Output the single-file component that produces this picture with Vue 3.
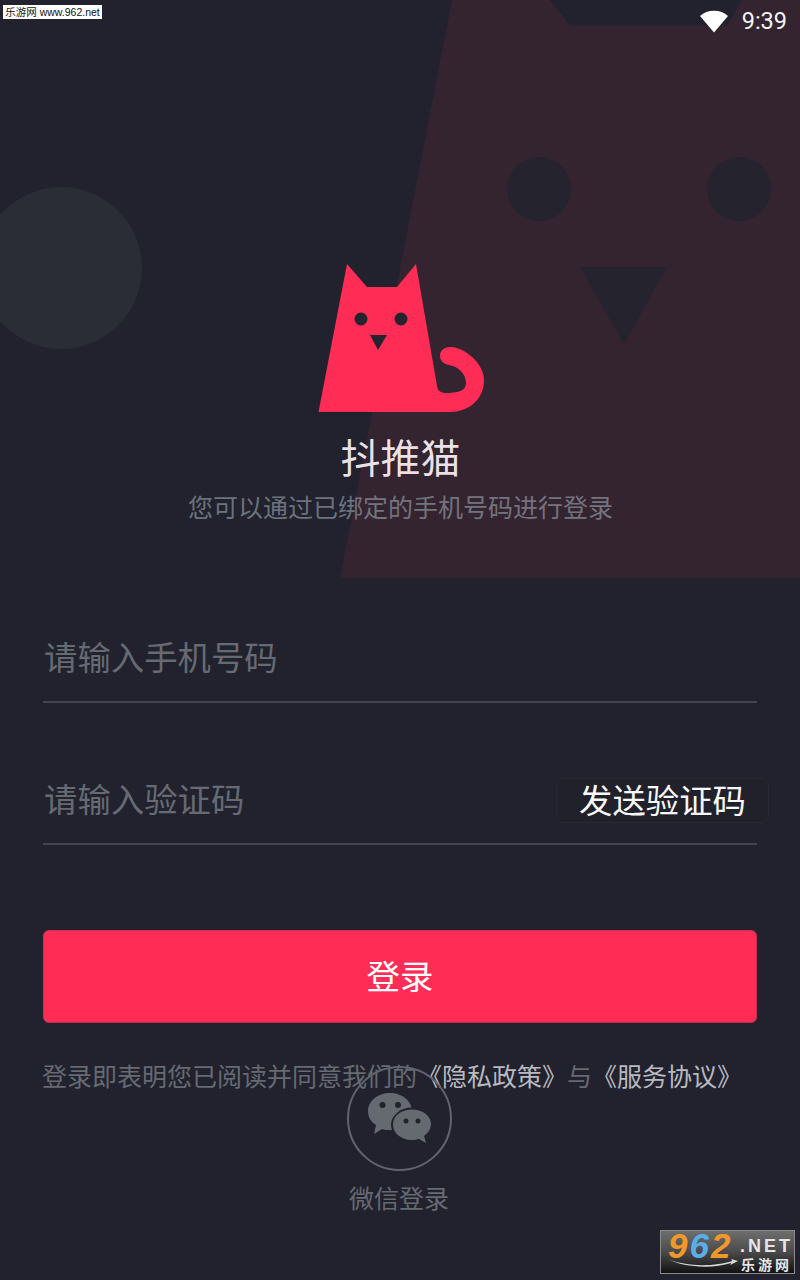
<script setup>
const fields = [
  { id: 'phone', placeholder: '请输入手机号码' },
  { id: 'code', placeholder: '请输入验证码', action: '发送验证码' },
]
</script>

<template>
  <div class="page">
    <svg class="backdrop" width="800" height="1280" viewBox="0 0 800 1280" aria-hidden="true">
      <circle cx="61" cy="268" r="81" fill="#2a2d36" />
      <path d="M452 0 L340 578 L800 578 L800 0 L742 0 L727 25.500 L570 25.500 L550 0 Z" fill="#332430" />
      <circle cx="539" cy="189" r="32" fill="#25232e" />
      <circle cx="739" cy="189" r="32" fill="#25232e" />
      <path d="M580 267 L667 267 L624 344 Z" fill="#25232e" />
    </svg>

    <div class="tag">乐游网 www.962.net</div>

    <header class="status">
      <svg width="30" height="25" viewBox="0 0 30 25" aria-hidden="true">
        <path d="M1 8 C8 1 22 1 29 8 L15 24.500 Z" fill="#fff" />
      </svg>
      <span>9:39</span>
    </header>

    <section class="brand">
      <svg class="logo" width="168" height="150" viewBox="318 263 168 150" aria-label="抖推猫">
        <path
          d="M347 264 L367 287 L397 287 L416 264 L437 386 Q438 393 445 393 C458 393 466 391 466 383 C466 374 458 366 449 365 C443 364 440 360 440 356 C440 350 445 347 451 347 C466 348 484 364 484 380 C484 400 468 412 450 412 L318.500 412 Z"
          fill="#ff2d55"
        />
        <circle cx="361" cy="319" r="6.500" fill="#25232e" />
        <circle cx="401" cy="319" r="6.500" fill="#25232e" />
        <path d="M370 335 L387 335 L378 350 Z" fill="#25232e" />
      </svg>
      <h1>抖推猫</h1>
      <p>您可以通过已绑定的手机号码进行登录</p>
    </section>

    <form class="form" @submit.prevent>
      <div v-for="field in fields" :key="field.id" class="field">
        <span class="placeholder">{{ field.placeholder }}</span>
        <button v-if="field.action" type="button" class="send">{{ field.action }}</button>
      </div>
      <button type="submit" class="login">登录</button>
    </form>

    <p class="terms">登录即表明您已阅读并同意我们的<em>《隐私政策》</em>与<em>《服务协议》</em></p>

    <div class="wechat">
      <span class="wechat-ring">
        <svg width="104" height="104" viewBox="347 1066 104 104" aria-hidden="true">
          <path d="M390 1093 C402 1093 412 1101 412 1111 C412 1122 402 1130 390 1130 C387 1130 384 1130 382 1129 L374 1134 L376 1125 C371 1122 368 1117 368 1111 C368 1101 378 1093 390 1093 Z" fill="#646a70" />
          <ellipse cx="412" cy="1125" rx="21" ry="17.500" fill="#21222d" />
          <path d="M412 1109.500 C423 1109.500 431 1116 431 1124 C431 1129 428 1133 424 1136 L426 1143 L419 1139 C417 1139.500 414 1140 412 1140 C401 1140 393 1133 393 1124.500 C393 1116 401 1109.500 412 1109.500 Z" fill="#646a70" />
          <circle cx="382.500" cy="1105" r="3" fill="#21222d" />
          <circle cx="398" cy="1105" r="3" fill="#21222d" />
          <circle cx="406" cy="1121" r="2.500" fill="#21222d" />
          <circle cx="418" cy="1121" r="2.500" fill="#21222d" />
        </svg>
      </span>
      <span class="wechat-label">微信登录</span>
    </div>

    <div class="badge">
      <span class="badge-left">
        <span class="badge-num"><i class="n1">9</i><i class="n2">6</i><i class="n1">2</i></span>
        <svg class="swoosh" width="70" height="10" viewBox="0 0 72 10" aria-hidden="true">
          <path d="M0 1 C18 9 48 9 66 3 L65 1 L72 3 L64 7 L65 5 C46 11 16 10 0 1 Z" fill="#d8d8d8" />
        </svg>
      </span>
      <span class="badge-side">
        <span class="badge-net">.NET</span>
        <span class="badge-cn">乐游网</span>
      </span>
    </div>
  </div>
</template>

<style>
html, body { margin: 0; background: #21222d; }
</style>

<style scoped>
.page {
  position: relative;
  width: 800px;
  height: 1280px;
  overflow: hidden;
  background: #21222d;
  font-family: "Noto Sans CJK SC", "Noto Sans", sans-serif;
  display: flex;
  flex-direction: column;
}
.backdrop { position: absolute; left: 0; top: 0; }
.status, .brand, .form, .terms, .wechat { position: relative; }

.tag {
  position: absolute;
  left: 3px;
  top: 5px;
  width: 99px;
  height: 14px;
  background: #fff;
  color: #111;
  font-size: 10.500px;
  line-height: 14px;
  font-family: "Liberation Sans", "Noto Sans CJK SC", sans-serif;
  white-space: nowrap;
  text-align: center;
}

.status {
  height: 40px;
  box-sizing: border-box;
  padding: 8px 13px 0 0;
  display: flex;
  justify-content: flex-end;
  gap: 13px;
  color: #f4f4f5;
  font-family: Roboto, sans-serif;
  font-size: 23.500px;
  line-height: 26px;
}

.brand {
  margin-top: 223px;
  display: flex;
  flex-direction: column;
  align-items: center;
}
.logo { margin-left: 3px; display: block; }
.brand h1 {
  margin: 18px 0 0;
  padding-left: 1px;
  font-size: 40px;
  font-weight: 400;
  line-height: 50px;
  color: rgba(255, 245, 250, 0.92);
}
.brand p {
  margin: 9px 0 0;
  padding-left: 1px;
  font-size: 25px;
  line-height: 32px;
  color: rgba(160, 170, 180, 0.6);
}

.form {
  margin: 91px 43px 0;
  display: flex;
  flex-direction: column;
}
.field {
  height: 90px;
  box-sizing: border-box;
  border-bottom: 2px solid #43444e;
  display: flex;
  align-items: center;
  justify-content: space-between;
  font-size: 33.400px;
}
.field + .field { margin-top: 52px; }
.placeholder { color: #666a72; margin-left: 1px; padding-bottom: 4px; }
.send {
  width: 213px;
  height: 45px;
  margin: 0 -12px 0 0;
  padding: 0 0 3px;
  background: #20212b;
  border: 1px solid #282933;
  border-radius: 8px;
  color: #f8f8f8;
  font: inherit;
  line-height: 40px;
  position: relative;
  top: 1px;
}
.login {
  margin-top: 85px;
  height: 93px;
  box-sizing: border-box;
  padding-bottom: 5px;
  border: 1px solid #c9304f;
  border-radius: 6px;
  background: #ff2d55;
  color: #fff;
  font: inherit;
  font-size: 33.400px;
}

.terms {
  margin: 34px 0 0 42px;
  font-size: 25px;
  line-height: 36px;
  color: #666a72;
  white-space: nowrap;
}
.terms em { font-style: normal; color: #b9bac0; }

.wechat {
  margin-top: -27px;
  display: flex;
  flex-direction: column;
  align-items: center;
  margin-left: -2px;
}
.wechat-ring {
  width: 105px;
  height: 105px;
  border-radius: 50%;
  box-sizing: border-box;
  border: 2px solid #60646c;
  display: block;
  position: relative;
}
.wechat-ring svg { position: absolute; left: -2px; top: -2px; }
.wechat-label {
  margin-top: 8px;
  font-size: 25px;
  line-height: 36px;
  color: #666a72;
}

.badge {
  position: absolute;
  left: 660px;
  top: 1230px;
  width: 135px;
  height: 44px;
  box-sizing: border-box;
  border: 1px solid #8a8a8a;
  background: linear-gradient(#6e6e6e, #4a4a4a 50%, #111);
  display: flex;
  align-items: flex-start;
  padding-left: 7px;
  font-family: "Liberation Sans", sans-serif;
}
.badge-left { display: flex; flex-direction: column; width: 71px; flex: none; }
.badge-num {
  font-size: 35px;
  font-weight: 700;
  line-height: 40px;
  height: 30px;
  letter-spacing: 2px;
  margin-top: -5px;
  white-space: nowrap;
}
.badge-num i { font-style: italic; }
.swoosh { display: block; margin-top: 2px; }
.n1 { color: #f2972b; }
.n2 { color: #5aaee8; }
.badge-side {
  display: flex;
  flex-direction: column;
  align-items: center;
  color: #e6e6e6;
  margin: 5px 0 0 1px;
}
.badge-net { font-size: 18px; font-weight: 700; letter-spacing: 3px; line-height: 20px; }
.badge-cn {
  font-family: "Noto Sans CJK SC", sans-serif;
  font-size: 14px;
  font-weight: 700;
  letter-spacing: 3px;
  line-height: 16px;
}
</style>
